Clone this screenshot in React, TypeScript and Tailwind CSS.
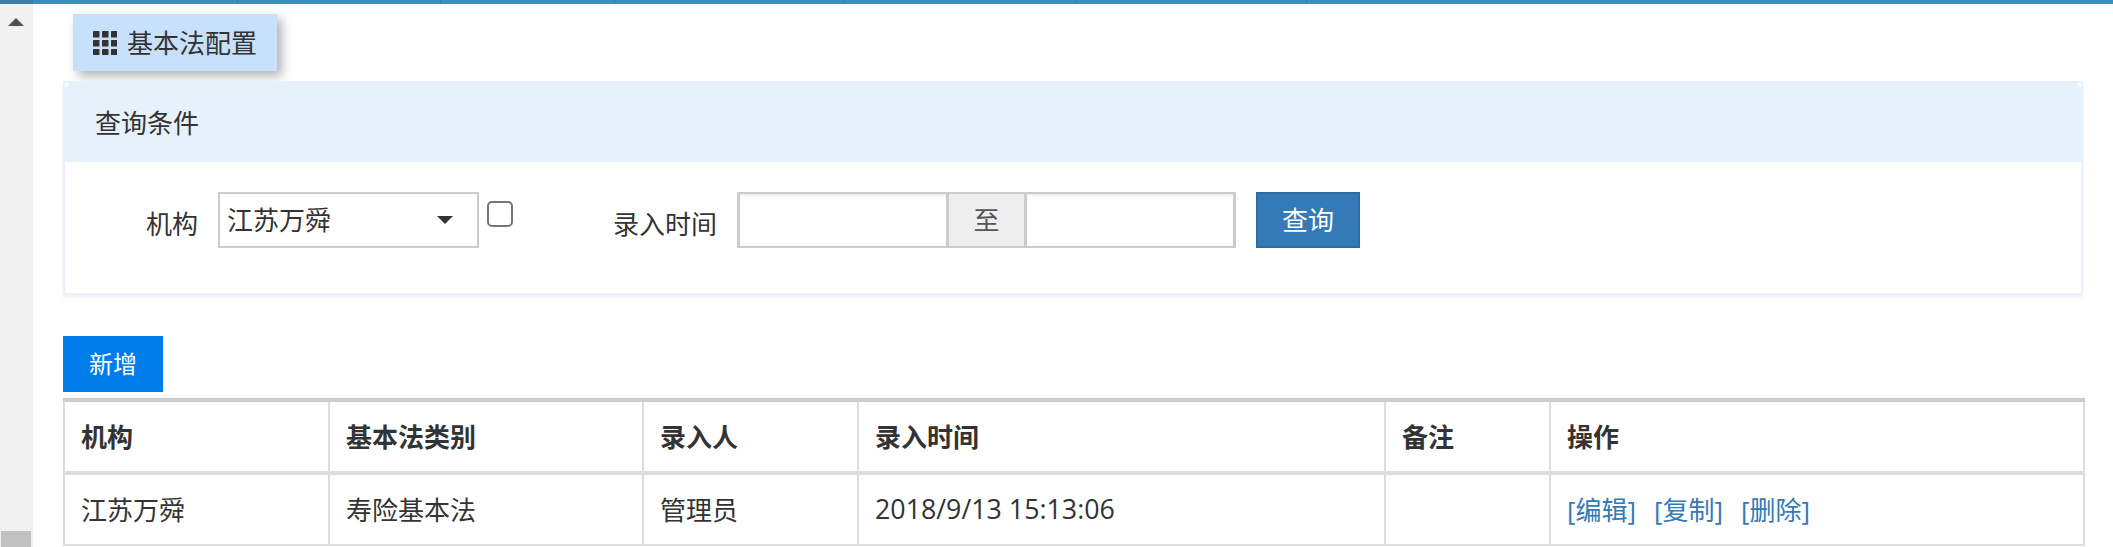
import React from "react";

const font = "font-['Open_Sans','Noto_Sans_CJK_SC',sans-serif]";

const columns = [265, 314, 215, 527, 165, 534];
const headers = ["机构", "基本法类别", "录入人", "录入时间", "备注", "操作"];

function GridIcon() {
  return (
    <svg width="24" height="24" viewBox="0 0 24 24" className="fill-[#333]">
      {[0, 9, 18].map((y) =>
        [0, 9, 18].map((x) => (
          <rect key={`${x}-${y}`} x={x} y={y} width="6.5" height="6.5" rx="0.6" />
        ))
      )}
    </svg>
  );
}

function Scrollbar() {
  return (
    <div className="w-[33px] shrink-0 bg-[#f1f1f1] flex flex-col justify-between items-center pt-[14px] pr-[1px]">
      <div className="w-0 h-0 border-x-[8px] border-x-transparent border-b-[8px] border-b-[#505050]" />
      <div className="w-[30px] h-[16px] bg-[#c1c1c1]" />
    </div>
  );
}

function TopBar() {
  return (
    <div className="h-[4px] bg-[#3c8dbc] flex shrink-0">
      <div className="w-[33px] bg-[#3a7fa8]" />
      {[205, 203, 174, 230, 231, 231].map((w, i) => (
        <div key={i} style={{ width: w }} className="border-r border-[#367fa9]" />
      ))}
    </div>
  );
}

export default function App() {
  return (
    <div className={`${font} w-[2113px] h-[547px] overflow-hidden bg-white text-[#333] text-[26px] flex flex-col`}>
      <TopBar />
      <div className="flex flex-1 min-h-0">
        <Scrollbar />
        <div className="flex-1 min-w-0 pl-[30px] pr-[30px]">
          <div className="ml-[10px] mt-[10px] w-[204px] h-[57px] bg-[#c7e1fd] shadow-[5px_5px_10px_rgba(0,0,0,0.3)] flex items-center pl-[20px] gap-[10px]">
            <GridIcon />
            <span className="leading-none">基本法配置</span>
          </div>

          {/* search panel */}
          <div className="mt-[10px] h-[214px] border-2 border-[#e7f1fb] shadow-[0_2px_3px_rgba(200,215,235,0.35)]">
            <div className="relative h-[79px] bg-[#e7f1fb] flex items-center pl-[30px] leading-none">
              查询条件
              <span className="absolute left-0 top-0 w-0 h-0 border-t-[5px] border-t-white/80 border-r-[5px] border-r-transparent" />
              <span className="absolute right-0 top-0 w-0 h-0 border-t-[5px] border-t-white/80 border-l-[5px] border-l-transparent" />
            </div>
            <div className="flex items-start pt-[30px]">
              <label className="ml-[81px] mr-[20px] mt-[19px] leading-none">机构</label>
              <div className="w-[261px] h-[56px] border-2 border-[#ccc] flex items-center justify-between pl-[7px] pr-[24px] leading-none">
                <span>江苏万舜</span>
                <span className="w-0 h-0 border-x-[8px] border-x-transparent border-t-[8px] border-t-[#333]" />
              </div>
              <div className="ml-[8px] mt-[9px] w-[26px] h-[26px] border-2 border-[#767676] rounded-[5px] bg-white" />
              <label className="ml-[100px] mr-[20px] mt-[19px] leading-none">录入时间</label>
              <div className="w-[499px] h-[56px] border-y-2 border-x-[3px] border-[#ccc] flex">
                <div className="w-[206px] shadow-[inset_0_2px_2px_rgba(0,0,0,0.07)]" />
                <div className="w-[81px] border-x-[3px] border-[#ccc] bg-[#eee] text-[#555] flex items-center justify-center leading-none">至</div>
                <div className="flex-1 shadow-[inset_0_2px_2px_rgba(0,0,0,0.07)]" />
              </div>
              <button className="ml-[20px] w-[104px] h-[56px] bg-[#337ab7] border-2 border-[#2e6da4] text-white leading-none">查询</button>
            </div>
          </div>

          <button className="mt-[41px] block w-[100px] h-[56px] bg-[#007bea] text-white text-[24px] leading-none">新增</button>

          {/* result table */}
          <table className="mt-[6px] w-[2020px] table-fixed border-collapse">
            <colgroup>
              {columns.map((w, i) => (
                <col key={i} style={{ width: w }} />
              ))}
            </colgroup>
            <thead>
              <tr className="h-[73px]">
                {headers.map((h) => (
                  <th key={h} className="border-2 border-[#ddd] border-t-4 border-t-[#ccc] border-b-4 px-[16px] text-left font-bold leading-none">
                    {h}
                  </th>
                ))}
              </tr>
            </thead>
            <tbody>
              <tr className="h-[72px]">
                <td className="border-2 border-[#ddd] px-[16px] leading-none">江苏万舜</td>
                <td className="border-2 border-[#ddd] px-[16px] leading-none">寿险基本法</td>
                <td className="border-2 border-[#ddd] px-[16px] leading-none">管理员</td>
                <td className="border-2 border-[#ddd] px-[16px] leading-none text-[26.8px]">2018/9/13 15:13:06</td>
                <td className="border-2 border-[#ddd] px-[16px] leading-none"></td>
                <td className="border-2 border-[#ddd] px-[16px] leading-none text-[#337ab7]">
                  <a className="mr-[18px]">[编辑]</a>
                  <a className="mr-[18px]">[复制]</a>
                  <a>[删除]</a>
                </td>
              </tr>
            </tbody>
          </table>
        </div>
      </div>
    </div>
  );
}
